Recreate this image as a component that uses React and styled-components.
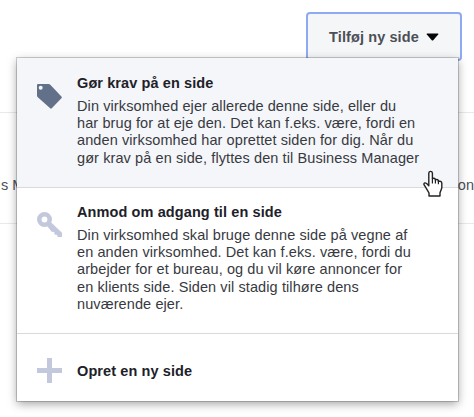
import React from "react";
import styled, { createGlobalStyle } from "styled-components";

const GlobalStyle = createGlobalStyle`
  * { box-sizing: border-box; }
  body {
    margin: 0;
    overflow: hidden;
    background: #fff;
    font-family: "Liberation Sans", Arial, sans-serif;
  }
`;

const Page = styled.main`
  position: relative;
  width: 474px;
  height: 417px;
  overflow: hidden;
`;

const Toolbar = styled.header`
  display: flex;
  justify-content: flex-end;
  height: 112px;
  padding: 12px 12px 0 0;
`;

const MenuButton = styled.button`
  display: flex;
  align-items: center;
  justify-content: center;
  gap: 7px;
  width: 156px;
  height: 49px;
  padding: 0;
  border: 2px solid #8faaf4;
  border-radius: 4px;
  background: #f5f6f8;
  color: #4b4f56;
  font: bold 14.5px "Liberation Sans", Arial, sans-serif;
  letter-spacing: 0.1px;
`;

const TableRow = styled.div`
  display: flex;
  justify-content: space-between;
  height: 112px;
  padding: 63px 0 0 1px;
  border-top: 1px solid #e9e9ea;
  border-bottom: 1px solid #e9e9ea;
  color: #4b4f56;
  font-size: 14.5px;
  line-height: 18px;
  white-space: nowrap;
`;

const Cell = styled.span`
  flex: none;
`;

const Menu = styled.section`
  position: absolute;
  top: 58px;
  left: 17px;
  width: 441px;
  height: 343px;
  display: grid;
  grid-template-rows: 130px 146px 67px;
  background: #fff;
  box-shadow: 0 0 0 1px rgba(0, 0, 0, 0.18), 0 3px 9px rgba(0, 0, 0, 0.36);
`;

const MenuItem = styled.article`
  display: grid;
  grid-template-columns: 40px 1fr;
  align-items: start;
  padding: ${(p) => p.$top}px 0 0 20px;
  border-bottom: ${(p) => (p.$last ? "0" : "1px solid #d9dadc")};
  background: ${(p) => (p.$active ? "#f5f6f9" : "#fff")};
`;

const IconSlot = styled.div`
  height: 25px;
  margin-top: ${(p) => p.$top}px;
`;

const Title = styled.h2`
  margin: 0;
  color: #1d2129;
  font-size: 14.5px;
  line-height: 18px;
  letter-spacing: 0.1px;
  white-space: nowrap;
`;

const Description = styled.p`
  margin: 6px 0 0;
  color: #373a41;
  font-size: 14.5px;
  line-height: 17.2px;
  letter-spacing: 0.1px;
  white-space: nowrap;
`;

const Cursor = styled.svg`
  position: absolute;
  left: 422px;
  top: 170px;
`;

const Caret = () => (
  <svg width="13" height="8" viewBox="0 0 13 8">
    <path d="M1 .5h11q.8.3.2 1L7.2 7.2q-.7.7-1.4 0L.8 1.5Q.2.8 1 .5Z" fill="#050608" />
  </svg>
);

const TagIcon = () => (
  <svg width="25" height="25" viewBox="0 0 25 25">
    <path
      d="M1 0h10.5q1 0 1.8.8L24.4 12.6q.8.8 0 1.6L14.8 24.3q-.8.8-1.6 0L.8 13.3Q0 12.5 0 11.5V1q0-1 1-1ZM3.7 1.8a2 2 0 1 0 0 4 2 2 0 0 0 0-4Z"
      fill="#637089"
      fillRule="evenodd"
    />
  </svg>
);

const KeyIcon = () => (
  <svg width="25" height="25" viewBox="0 0 25 25">
    <circle cx="7.5" cy="7.5" r="5.2" fill="none" stroke="#c3c8dc" strokeWidth="4.6" />
    <path d="m9.8 13.4 3.6-3.6L25 20.8V25h-4.4l-.4-2-2.6-.4-.4-2.5-2.6-.4Z" fill="#c3c8dc" />
  </svg>
);

const PlusIcon = () => (
  <svg width="25" height="25" viewBox="0 0 25 25">
    <path d="M10 0h5v10h10v5H15v10h-5V15H0v-5h10Z" fill="#c3c8dc" />
  </svg>
);

const items = [
  {
    title: "Gør krav på en side",
    top: 16,
    iconTop: 10,
    icon: <TagIcon />,
    active: true,
    lines: [
      "Din virksomhed ejer allerede denne side, eller du",
      "har brug for at eje den. Det kan f.eks. være, fordi en",
      "anden virksomhed har oprettet siden for dig. Når du",
      "gør krav på en side, flyttes den til Business Manager",
    ],
  },
  {
    title: "Anmod om adgang til en side",
    top: 15,
    iconTop: 9,
    icon: <KeyIcon />,
    lines: [
      "Din virksomhed skal bruge denne side på vegne af",
      "en anden virksomhed. Det kan f.eks. være, fordi du",
      "arbejder for et bureau, og du vil køre annoncer for",
      "en klients side. Siden vil stadig tilhøre dens",
      "nuværende ejer.",
    ],
  },
  { title: "Opret en ny side", top: 28, iconTop: -4, icon: <PlusIcon />, last: true },
];

export default function App() {
  return (
    <>
      <GlobalStyle />
      <Page>
        <Toolbar>
          <MenuButton>
            Tilføj ny side <Caret />
          </MenuButton>
        </Toolbar>
        <TableRow>
          <Cell>s M</Cell>
          <Cell>on</Cell>
        </TableRow>
        <Menu>
          {items.map((item) => (
            <MenuItem key={item.title} $top={item.top} $active={item.active} $last={item.last}>
              <IconSlot $top={item.iconTop}>{item.icon}</IconSlot>
              <div>
                <Title>{item.title}</Title>
                {item.lines && (
                  <Description>
                    {item.lines.map((line, i) => (
                      <React.Fragment key={line}>
                        {i > 0 && <br />}
                        {line}
                      </React.Fragment>
                    ))}
                  </Description>
                )}
              </div>
            </MenuItem>
          ))}
        </Menu>
        <Cursor width="23" height="28" viewBox="0 0 23 28">
          <path
            d="M7 26v-3Q5.9 21 4.3 18.3L2 14.7q-.4-1.5 1-1.8 1.4-.2 3.8 2.9V3.2q.2-1.8 1.8-1.8t1.8 1.8v5.4q1.8-1 3 .6v.8q1.8-1 3 .4v1q2.8-.8 3.4 1.6v5L18 22.7V26Z"
            fill="#fff"
            stroke="#222"
            strokeWidth="1.4"
            strokeLinejoin="round"
          />
          <path d="M10.4 8.5v5M13.4 9.5v4M16.4 10.8v3.4" fill="none" stroke="#222" strokeWidth="1.2" />
        </Cursor>
      </Page>
    </>
  );
}
